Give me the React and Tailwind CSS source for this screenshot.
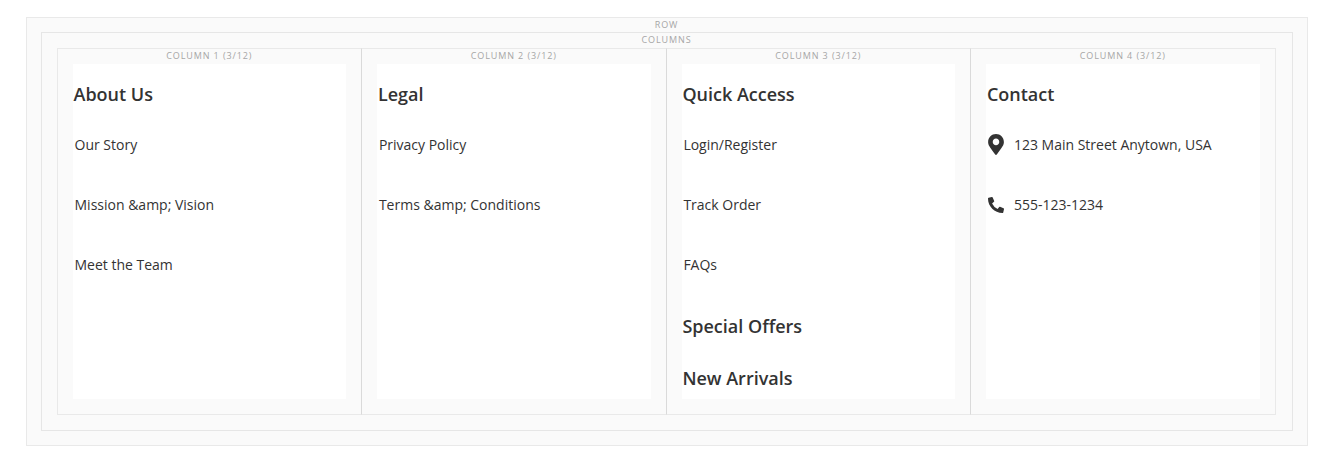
const columns = [
  { title: 'About Us', links: ['Our Story', 'Mission &amp; Vision', 'Meet the Team'], inset: 'pl-[0.5px]' },
  { title: 'Legal', links: ['Privacy Policy', 'Terms &amp; Conditions'], inset: 'pl-[0.9px]' },
  {
    title: 'Quick Access',
    links: ['Login/Register', 'Track Order', 'FAQs'],
    extra: ['Special Offers', 'New Arrivals'],
    inset: 'pl-[0.4px]',
  },
  {
    title: 'Contact',
    contacts: [
      { icon: 'pin', text: '123 Main Street Anytown, USA' },
      { icon: 'phone', text: '555-123-1234' },
    ],
    inset: 'pl-[0.9px]',
  },
];

function Label({ children, className = '' }) {
  return (
    <div className={`text-center text-[9px] tracking-[0.9px] text-[#a6a6a6] uppercase ${className}`}>
      {children}
    </div>
  );
}

function PinIcon() {
  return (
    <svg viewBox="0 0 384 512" className="mt-px h-[21px] w-4 shrink-0" fill="#333333">
      <path d="M172.268 501.67C26.97 291.031 0 269.413 0 192 0 85.961 85.961 0 192 0s192 85.961 192 192c0 77.413-26.97 99.031-172.268 309.67-9.535 13.774-29.93 13.773-39.464 0zM192 272c44.183 0 80-35.817 80-80s-35.817-80-80-80-80 35.817-80 80 35.817 80 80 80z" />
    </svg>
  );
}

function PhoneIcon() {
  return (
    <svg viewBox="0 0 512 512" className="mt-0.5 size-4 shrink-0" fill="#333333">
      <path d="M497.39 361.8l-112-48a24 24 0 0 0-28 6.9l-49.6 60.6A370.66 370.66 0 0 1 130.6 204.11l60.6-49.6a23.94 23.94 0 0 0 6.9-28l-48-112A24.16 24.16 0 0 0 122.6.61l-104 24A24 24 0 0 0 0 48c0 256.5 207.9 464 464 464a24 24 0 0 0 23.4-18.6l24-104a24.29 24.29 0 0 0-14.01-27.6z" />
    </svg>
  );
}

function Heading({ children, className = '' }) {
  return (
    <h2 className={`text-[18px] leading-5 font-semibold text-[#333333] ${className}`}>{children}</h2>
  );
}

function Column({ column, number, last }) {
  return (
    <section
      className={`flex flex-col border-y border-l border-y-[#e9e9e9] px-[15px] pb-[15px] ${
        number === 1 ? 'border-l-[#e9e9e9]' : 'border-l-[#dadada]'
      } ${last ? 'border-r border-r-[#e9e9e9]' : ''}`}
    >
      <Label className="h-[15px] pr-[0.5px] leading-[14px]">{`Column ${number} (3/12)`}</Label>
      <div className={`flex-1 bg-white pt-5 ${column.inset}`}>
        <Heading>{column.title}</Heading>
        <ul className="mt-[10px] pl-px text-[14px] text-[#333333]">
          {column.links?.map((link) => (
            <li key={link} className="flex h-[60px] items-center">
              {link}
            </li>
          ))}
          {column.contacts?.map((contact) => (
            <li key={contact.text} className="flex h-[60px] items-center gap-[10px]">
              {contact.icon === 'pin' ? <PinIcon /> : <PhoneIcon />}
              {contact.text}
            </li>
          ))}
        </ul>
        {column.extra && (
          <div className="mt-[22px] flex flex-col gap-8">
            {column.extra.map((title) => (
              <Heading key={title}>{title}</Heading>
            ))}
          </div>
        )}
      </div>
    </section>
  );
}

export default function App() {
  return (
    <main className="h-[469px] bg-white pt-[17px] pl-[26px] font-['Open_Sans',sans-serif]">
      <div className="flex h-[429px] w-[1282px] flex-col border border-[#e9e9e9] bg-[#fafafa] px-[14px] pb-[14px]">
        <Label className="h-[14px] pr-px leading-[14px]">Row</Label>
        <div className="flex flex-1 flex-col border border-[#e6e6e6] px-[15px] pb-[15px]">
          <Label className="h-[15px] pr-px leading-[14px]">Columns</Label>
          <div className="grid flex-1 grid-cols-[304px_305px_304px_306px]">
            {columns.map((column, index) => (
              <Column
                key={column.title}
                column={column}
                number={index + 1}
                last={index === columns.length - 1}
              />
            ))}
          </div>
        </div>
      </div>
    </main>
  );
}
